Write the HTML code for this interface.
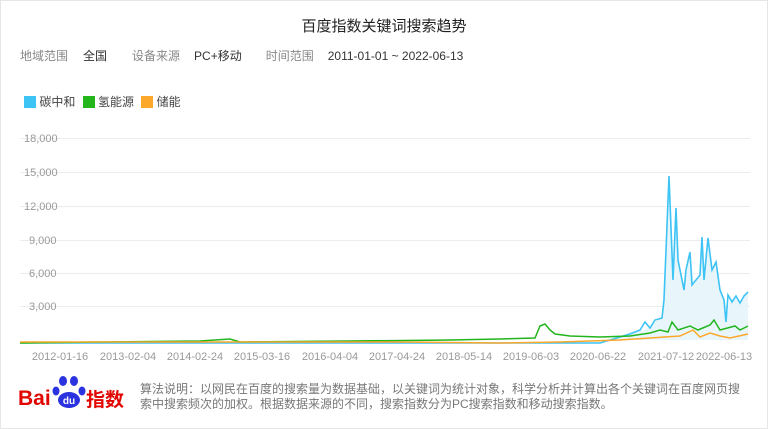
<!DOCTYPE html>
<html><head><meta charset="utf-8"><style>
body{margin:0;width:768px;height:429px;background:#fff;font-family:"Liberation Sans","Noto Sans CJK SC",sans-serif;overflow:hidden;position:relative}
.t{position:absolute;white-space:nowrap}
</style></head><body>
<div style="position:absolute;left:0;top:0;width:766px;height:427px;border:1px solid #e6e6e6"></div>
<div class="t" style="left:0;width:768px;text-align:center;top:15px;font-size:15px;color:#222">百度指数关键词搜索趋势</div>
<div class="t" style="left:20px;top:47px;font-size:12px;color:#888">地域范围<span style="color:#333;margin-left:15px">全国</span><span style="margin-left:25px">设备来源</span><span style="color:#333;margin-left:14px">PC+移动</span><span style="margin-left:24px">时间范围</span><span style="color:#333;margin-left:14px">2011-01-01 ~ 2022-06-13</span></div>
<div class="t" style="top:93px;left:24px;font-size:12px;color:#444">
<span style="display:inline-block;width:12px;height:12px;background:#3ec3f5;vertical-align:-2px"></span> 碳中和
<span style="display:inline-block;width:12px;height:12px;background:#22b51c;vertical-align:-2px;margin-left:4px"></span> 氢能源
<span style="display:inline-block;width:12px;height:12px;background:#fca82a;vertical-align:-2px;margin-left:4px"></span> 储能</div>
<svg style="position:absolute;left:0;top:0" width="768" height="429" font-family="Liberation Sans" font-size="11" fill="#999">
<g stroke="#ececec" stroke-width="1">
<line x1="20" x2="750" y1="138.5" y2="138.5"/><line x1="20" x2="750" y1="172.5" y2="172.5"/><line x1="20" x2="750" y1="206.5" y2="206.5"/><line x1="20" x2="750" y1="240.5" y2="240.5"/><line x1="20" x2="750" y1="273.5" y2="273.5"/><line x1="20" x2="750" y1="306.5" y2="306.5"/></g>
<g text-anchor="start"><text x="24" y="142">18,000</text><text x="24" y="176">15,000</text><text x="24" y="210">12,000</text><text x="29" y="244">9,000</text><text x="29" y="277">6,000</text><text x="29" y="310">3,000</text></g>
<polygon fill="#e8f6fc" points="610,340 630,332 645,330 655,322 662,318 669,176 673,280 676,208 680,270 684,290 690,252 694,285 700,275 702,237 705,275 708,238 712,270 716,262 720,290 724,300 726,322 730,300 735,298 740,302 744,296 748,292 748,340"/>
<polyline fill="none" stroke="#3ec3f5" stroke-width="1.6" points="20,343 600,343 610,340 630,334 640,330 645,322 650,328 655,320 662,318 664,300 669,176 673,280 676,208 678,260 680,270 684,290 686,270 690,252 692,285 696,280 700,275 702,237 704,280 708,238 712,270 716,262 720,290 724,300 726,322 728,295 732,302 736,296 740,303 744,296 748,292"/>
<polyline fill="none" stroke="#22b51c" stroke-width="1.5" points="20,343 100,342 200,341 230,339 240,342 350,341 450,340 500,339 535,338 540,326 545,324 550,330 555,334 570,336 600,337 630,336 650,333 660,330 668,332 672,322 678,330 690,326 698,330 710,325 714,320 720,330 735,326 740,330 748,326"/>
<polyline fill="none" stroke="#fca82a" stroke-width="1.5" points="20,342 200,342 400,342 500,343 560,342 620,340 650,338 680,336 693,330 700,337 710,333 720,336 730,338 748,334"/>
<g text-anchor="middle"><text x="60" y="360">2012-01-16</text><text x="128" y="360">2013-02-04</text><text x="195" y="360">2014-02-24</text><text x="262" y="360">2015-03-16</text><text x="330" y="360">2016-04-04</text><text x="397" y="360">2017-04-24</text><text x="464" y="360">2018-05-14</text><text x="531" y="360">2019-06-03</text><text x="598" y="360">2020-06-22</text><text x="666" y="360">2021-07-12</text><text x="724" y="360">2022-06-13</text></g>
<text x="18" y="405" font-size="21" font-weight="bold" fill="#e10601">Bai</text>
<g fill="#2a33df"><ellipse cx="63" cy="381" rx="4" ry="5"/><ellipse cx="74" cy="381" rx="4" ry="5"/><ellipse cx="56" cy="391" rx="3.5" ry="4.5"/><ellipse cx="82" cy="391" rx="3.5" ry="4.5"/><ellipse cx="69" cy="400" rx="11" ry="8"/></g>
<text x="69" y="404" text-anchor="middle" font-size="10" fill="#fff" font-weight="bold">du</text>
<text x="86" y="406" font-size="19" font-weight="bold" fill="#e10601" font-family="Noto Sans CJK SC">指数</text>
<text x="140" y="393" font-size="12" fill="#777" font-family="Liberation Sans,Noto Sans CJK SC">算法说明：以网民在百度的搜索量为数据基础，以关键词为统计对象，科学分析并计算出各个关键词在百度网页搜</text>
<text x="140" y="408" font-size="12" fill="#777" font-family="Liberation Sans,Noto Sans CJK SC">索中搜索频次的加权。根据数据来源的不同，搜索指数分为PC搜索指数和移动搜索指数。</text>
</svg>
</body></html>
